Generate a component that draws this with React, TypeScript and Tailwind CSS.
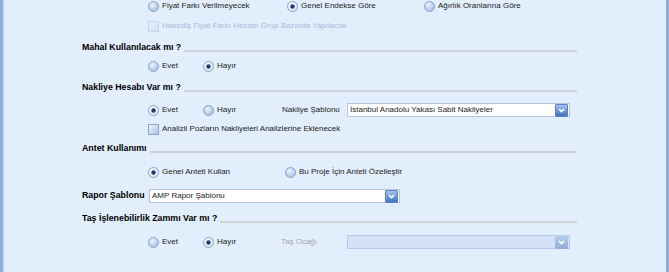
import type { ReactNode } from "react"

const font = { fontFamily: '"Liberation Sans", Arial, sans-serif' }

function Radio({ checked = false }: { checked?: boolean }) {
  return (
    <svg width="11" height="11" viewBox="0 0 11 11" className="shrink-0">
      <defs>
        <radialGradient id={checked ? "rOn" : "rOff"} cx="40%" cy="35%" r="70%">
          <stop offset="0%" stopColor={checked ? "#ffffff" : "#eef4fc"} />
          <stop offset="100%" stopColor={checked ? "#d6e2f2" : "#9fbbe3"} />
        </radialGradient>
      </defs>
      <circle cx="5.5" cy="5.5" r="5" fill={`url(#${checked ? "rOn" : "rOff"})`} stroke="#8ba4c6" strokeWidth="1" />
      {checked && <circle cx="5.5" cy="5.5" r="2.2" fill="#1c3a78" />}
    </svg>
  )
}

function Check({ disabled = false }: { disabled?: boolean }) {
  return (
    <span
      className={
        disabled
          ? "block h-[11px] w-[11px] shrink-0 border border-[#c5d5ea] bg-gradient-to-br from-[#eef4fc] to-[#cddcf1]"
          : "block h-[11px] w-[11px] shrink-0 border border-[#8ba4c6] bg-gradient-to-br from-[#eef4fc] to-[#aac3e6]"
      }
    />
  )
}

function Option({ checked, label, width }: { checked?: boolean; label: string; width: string }) {
  return (
    <div className={`flex shrink-0 items-center gap-[3px] ${width}`}>
      <Radio checked={checked} />
      <span>{label}</span>
    </div>
  )
}

function Chevron({ disabled = false }: { disabled?: boolean }) {
  return (
    <span
      className={
        disabled
          ? "flex h-[13px] w-[13px] items-center justify-center rounded-[1px] bg-gradient-to-b from-[#b9cdea] to-[#8fadd8]"
          : "flex h-[13px] w-[13px] items-center justify-center rounded-[1px] border border-[#5a82c0] bg-gradient-to-b from-[#a7c4ee] to-[#3f72c4]"
      }
    >
      <svg width="7" height="5" viewBox="0 0 7 5">
        <path d="M1 1 L3.5 3.5 L6 1" fill="none" stroke="#ffffff" strokeWidth="1.6" />
      </svg>
    </span>
  )
}

function Combo({ value, width, disabled = false }: { value?: string; width: string; disabled?: boolean }) {
  return (
    <div
      className={
        disabled
          ? `flex h-[14px] shrink-0 items-center justify-between border border-[#b4cbeb] bg-[#d3e2f6] pr-[1px] ${width}`
          : `flex h-[14px] shrink-0 items-center justify-between border border-[#b3c6df] bg-white pl-[2px] pr-[1px] ${width}`
      }
    >
      <span>{value}</span>
      <Chevron disabled={disabled} />
    </div>
  )
}

function Heading({ children, top }: { children: ReactNode; top: string }) {
  return (
    <div className={`flex h-[12px] w-[495px] items-center ${top}`}>
      <span className="shrink-0 text-[8.8px] font-bold text-black">{children}</span>
      <span className="ml-[3px] mt-[5px] h-[2px] flex-1 bg-[#cfd1d4]" />
    </div>
  )
}

function Row({ children, top }: { children: ReactNode; top: string }) {
  return <div className={`ml-[66px] flex h-[12px] items-center ${top}`}>{children}</div>
}

export default function App() {
  return (
    <div
      style={font}
      className="flex h-[272px] w-[669px] overflow-hidden border-l-[3px] border-r-[3px] border-[#8eaedb] bg-[#e2eefc] text-[8px] text-[#1b1b1b]"
    >
      <div className="flex flex-1 flex-col border-l border-[#c4d8f3] pl-[78px]">
        <Row top="mt-0">
          <Option label="Fiyat Farkı Verilmeyecek" width="w-[139px]" />
          <Option checked label="Genel Endekse Göre" width="w-[137px]" />
          <Option label="Ağırlık Oranlarına Göre" width="w-[140px]" />
        </Row>
        <Row top="mt-[8px]">
          <div className="flex items-center gap-[3px] text-[#a6bcda]">
            <Check disabled />
            <span>Hakediş Fiyat Farkı Hesabı Grup Bazında Yapılacak</span>
          </div>
        </Row>

        <Heading top="mt-[10px]">Mahal Kullanılacak mı ?</Heading>
        <Row top="mt-[6px]">
          <Option label="Evet" width="w-[55px]" />
          <Option checked label="Hayır" width="w-[60px]" />
        </Row>

        <Heading top="mt-[10px]">Nakliye Hesabı Var mı ?</Heading>
        <Row top="mt-[10px]">
          <Option checked label="Evet" width="w-[55px]" />
          <Option label="Hayır" width="w-[79px]" />
          <span className="w-[65px] shrink-0">Nakliye Şablonu</span>
          <Combo value="İstanbul Anadolu Yakası Sabit Nakliyeler" width="w-[223px]" />
        </Row>
        <Row top="mt-[7px]">
          <div className="flex items-center gap-[3px]">
            <Check />
            <span>Analizli Pozların Nakliyeleri Analizlerine Eklenecek</span>
          </div>
        </Row>

        <Heading top="mt-[8px]">Antet Kullanımı</Heading>
        <Row top="mt-[11px]">
          <Option checked label="Genel Anteti Kullan" width="w-[137px]" />
          <Option label="Bu Proje İçin Anteti Özelleştir" width="w-[140px]" />
        </Row>

        <div className="mt-[11px] flex h-[14px] items-center">
          <span className="w-[67px] shrink-0 text-[8.8px] font-bold text-black">Rapor Şablonu</span>
          <Combo value="AMP Rapor Şablonu" width="w-[251px]" />
        </div>

        <Heading top="mt-[10px]">Taş İşlenebilirlik Zammı Var mı ?</Heading>
        <Row top="mt-[11px]">
          <Option label="Evet" width="w-[55px]" />
          <Option checked label="Hayır" width="w-[78px]" />
          <span className="w-[66px] shrink-0 text-[#a3a7ad]">Taş Ocağı</span>
          <Combo disabled width="w-[223px]" />
        </Row>
      </div>
    </div>
  )
}
